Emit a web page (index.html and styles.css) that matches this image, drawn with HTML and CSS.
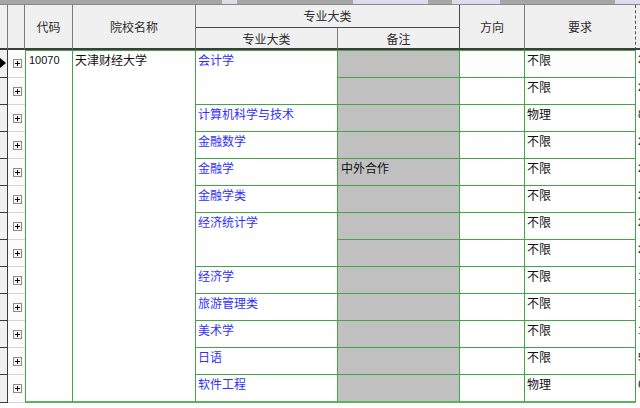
FILE: index.html
```html
<!DOCTYPE html>
<html lang="zh">
<head>
<meta charset="utf-8">
<title>专业大类</title>
<link rel="stylesheet" href="styles.css">
</head>
<body>
<div class="strip">
  <span class="sg s1"></span><span class="sl s2"></span><span class="sg s3"></span><span class="sl s4"></span><span class="sg s5"></span><span class="sl s6"></span><span class="sg s7"></span><span class="sl s8"></span>
</div>
<div class="grid">
  <!-- header -->
  <div class="h hs"></div>
  <div class="h hs"></div>
  <div class="h hs">代码</div>
  <div class="h hs">院校名称</div>
  <div class="h hg">专业大类</div>
  <div class="h hs">方向</div>
  <div class="h hs dash">要求</div>
  <div class="h hs hx"></div>
  <div class="h hsub">专业大类</div>
  <div class="h hsub hdark">备注</div>

  <!-- merged data cells -->
  <div class="c top bot code num">10070</div>
  <div class="c top bot school">天津财经大学</div>
  <div class="c top major m1">会计学</div>
  <div class="c major m7">经济统计学</div>

  <!-- row 1 -->
  <div class="sel"><svg width="6" height="10" viewBox="0 0 6 10"><path d="M0 0 L6 5 L0 10 Z" fill="#000"/></svg></div>
  <div class="exp"><svg class="plus" width="9" height="9" viewBox="0 0 9 9"><rect x="0.5" y="0.5" width="8" height="8" fill="#f6f6f6" stroke="#8c8c8c"/><path d="M2 4.5 H7 M4.5 2 V7" stroke="#000"/></svg></div>
  <div class="c top rem"></div>
  <div class="c top"></div>
  <div class="c top">不限</div>
  <div class="x">2</div>

  <!-- row 2 -->
  <div class="sel"></div>
  <div class="exp"><svg class="plus" width="9" height="9" viewBox="0 0 9 9"><rect x="0.5" y="0.5" width="8" height="8" fill="#f6f6f6" stroke="#8c8c8c"/><path d="M2 4.5 H7 M4.5 2 V7" stroke="#000"/></svg></div>
  <div class="c rem"></div>
  <div class="c"></div>
  <div class="c">不限</div>
  <div class="x">2</div>

  <!-- row 3 -->
  <div class="sel"></div>
  <div class="exp"><svg class="plus" width="9" height="9" viewBox="0 0 9 9"><rect x="0.5" y="0.5" width="8" height="8" fill="#f6f6f6" stroke="#8c8c8c"/><path d="M2 4.5 H7 M4.5 2 V7" stroke="#000"/></svg></div>
  <div class="c major">计算机科学与技术</div>
  <div class="c rem"></div>
  <div class="c"></div>
  <div class="c">物理</div>
  <div class="x">8</div>

  <!-- row 4 -->
  <div class="sel"></div>
  <div class="exp"><svg class="plus" width="9" height="9" viewBox="0 0 9 9"><rect x="0.5" y="0.5" width="8" height="8" fill="#f6f6f6" stroke="#8c8c8c"/><path d="M2 4.5 H7 M4.5 2 V7" stroke="#000"/></svg></div>
  <div class="c major">金融数学</div>
  <div class="c rem"></div>
  <div class="c"></div>
  <div class="c">不限</div>
  <div class="x">2</div>

  <!-- row 5 -->
  <div class="sel"></div>
  <div class="exp"><svg class="plus" width="9" height="9" viewBox="0 0 9 9"><rect x="0.5" y="0.5" width="8" height="8" fill="#f6f6f6" stroke="#8c8c8c"/><path d="M2 4.5 H7 M4.5 2 V7" stroke="#000"/></svg></div>
  <div class="c major">金融学</div>
  <div class="c rem">中外合作</div>
  <div class="c"></div>
  <div class="c">不限</div>
  <div class="x">2</div>

  <!-- row 6 -->
  <div class="sel"></div>
  <div class="exp"><svg class="plus" width="9" height="9" viewBox="0 0 9 9"><rect x="0.5" y="0.5" width="8" height="8" fill="#f6f6f6" stroke="#8c8c8c"/><path d="M2 4.5 H7 M4.5 2 V7" stroke="#000"/></svg></div>
  <div class="c major">金融学类</div>
  <div class="c rem"></div>
  <div class="c"></div>
  <div class="c">不限</div>
  <div class="x">2</div>

  <!-- row 7 -->
  <div class="sel"></div>
  <div class="exp"><svg class="plus" width="9" height="9" viewBox="0 0 9 9"><rect x="0.5" y="0.5" width="8" height="8" fill="#f6f6f6" stroke="#8c8c8c"/><path d="M2 4.5 H7 M4.5 2 V7" stroke="#000"/></svg></div>
  <div class="c rem"></div>
  <div class="c"></div>
  <div class="c">不限</div>
  <div class="x">2</div>

  <!-- row 8 -->
  <div class="sel"></div>
  <div class="exp"><svg class="plus" width="9" height="9" viewBox="0 0 9 9"><rect x="0.5" y="0.5" width="8" height="8" fill="#f6f6f6" stroke="#8c8c8c"/><path d="M2 4.5 H7 M4.5 2 V7" stroke="#000"/></svg></div>
  <div class="c rem"></div>
  <div class="c"></div>
  <div class="c">不限</div>
  <div class="x">2</div>

  <!-- row 9 -->
  <div class="sel"></div>
  <div class="exp"><svg class="plus" width="9" height="9" viewBox="0 0 9 9"><rect x="0.5" y="0.5" width="8" height="8" fill="#f6f6f6" stroke="#8c8c8c"/><path d="M2 4.5 H7 M4.5 2 V7" stroke="#000"/></svg></div>
  <div class="c major">经济学</div>
  <div class="c rem"></div>
  <div class="c"></div>
  <div class="c">不限</div>
  <div class="x">1</div>

  <!-- row 10 -->
  <div class="sel"></div>
  <div class="exp"><svg class="plus" width="9" height="9" viewBox="0 0 9 9"><rect x="0.5" y="0.5" width="8" height="8" fill="#f6f6f6" stroke="#8c8c8c"/><path d="M2 4.5 H7 M4.5 2 V7" stroke="#000"/></svg></div>
  <div class="c major">旅游管理类</div>
  <div class="c rem"></div>
  <div class="c"></div>
  <div class="c">不限</div>
  <div class="x">1</div>

  <!-- row 11 -->
  <div class="sel"></div>
  <div class="exp"><svg class="plus" width="9" height="9" viewBox="0 0 9 9"><rect x="0.5" y="0.5" width="8" height="8" fill="#f6f6f6" stroke="#8c8c8c"/><path d="M2 4.5 H7 M4.5 2 V7" stroke="#000"/></svg></div>
  <div class="c major">美术学</div>
  <div class="c rem"></div>
  <div class="c"></div>
  <div class="c">不限</div>
  <div class="x">1</div>

  <!-- row 12 -->
  <div class="sel"></div>
  <div class="exp"><svg class="plus" width="9" height="9" viewBox="0 0 9 9"><rect x="0.5" y="0.5" width="8" height="8" fill="#f6f6f6" stroke="#8c8c8c"/><path d="M2 4.5 H7 M4.5 2 V7" stroke="#000"/></svg></div>
  <div class="c major">日语</div>
  <div class="c rem"></div>
  <div class="c"></div>
  <div class="c">不限</div>
  <div class="x">5</div>

  <!-- row 13 -->
  <div class="sel"></div>
  <div class="exp"><svg class="plus" width="9" height="9" viewBox="0 0 9 9"><rect x="0.5" y="0.5" width="8" height="8" fill="#f6f6f6" stroke="#8c8c8c"/><path d="M2 4.5 H7 M4.5 2 V7" stroke="#000"/></svg></div>
  <div class="c bot major">软件工程</div>
  <div class="c bot rem"></div>
  <div class="c bot"></div>
  <div class="c bot">物理</div>
  <div class="x">6</div>
</div>
</body>
</html>
```
FILE: styles.css
```css
html, body {
  margin: 0;
  padding: 0;
}
body {
  width: 640px;
  height: 408px;
  overflow: hidden;
  background: #ffffff;
  font-family: "Noto Sans CJK SC", "Noto Sans", sans-serif;
  font-size: 12px;
  color: #111;
}

/* top scroll strip */
.strip {
  display: flex;
  height: 5px;
  width: 640px;
  border-bottom: 1px solid #8a8a8a;
  box-sizing: border-box;
}
.sg { background: #a6a6a6; }
.sl { background: #dcdcec; }
.s1 { width: 222px; }
.s2 { width: 15px; }
.s3 { width: 116px; }
.s4 { width: 75px; }
.s5 { width: 24px; }
.s6 { width: 48px; }
.s7 { width: 115px; }
.s8 { width: 25px; }

/* grid */
.grid {
  display: grid;
  width: 676px;
  grid-template-columns: 8px 17px 48px 123px 142px 122px 65px 111px 40px;
  grid-template-rows: 23px 22px 28px repeat(11, 27px) 28px;
}
.grid > div {
  box-sizing: border-box;
  overflow: hidden;
  white-space: nowrap;
}

/* header */
.h {
  background: #f0f0f0;
  border-right: 1px solid #7c7c7c;
  display: flex;
  align-items: center;
  justify-content: center;
  color: #2c2c2c;
  line-height: 14px;
}
.hs {
  grid-row: span 2;
  border-bottom: 2px solid #3c3c3c;
}
.hg {
  grid-column: span 2;
  border-bottom: 1px solid #4a4a4a;
  border-right-color: #4a4a4a;
}
.hsub {
  border-bottom: 2px solid #3c3c3c;
  padding-top: 1px;
}
.hdark { border-right-color: #4a4a4a; }
.dash { border-right: 1px dashed #555; }
.h.hx { border-right: none; border-left: 1px solid #4a4a4a; }
.h.dash + .hx { border-left: none; }

/* data */
.sel {
  background: #f0f0f0;
  border-right: 1px solid #3c3c3c;
  border-bottom: 1px solid #3c3c3c;
  display: flex;
  align-items: center;
  padding-bottom: 2px;
}
.exp {
  background: #fcfcfc;
  border-bottom: 1px solid #d6d6d6;
  display: flex;
  align-items: center;
  justify-content: center;
  padding-left: 1px;
}
.plus { display: block; }

.c {
  border-right: 1px solid #45a445;
  border-bottom: 1px solid #45a445;
  padding: 1px 2px 0;
  line-height: 15px;
  background: #fff;
}
.c.top { border-top: 1px solid #45a445; }
.c.bot { border-bottom: 2px solid #5fb35f; }
.code {
  grid-column: 3;
  grid-row: 3 / span 13;
  border-left: 1px solid #45a445;
  border-right-width: 1px;
}
.school {
  grid-column: 4;
  grid-row: 3 / span 13;
  padding-left: 2px;
}
.num {
  font-family: "Liberation Sans", "DejaVu Sans", sans-serif;
  font-size: 11px;
  padding-left: 3px;
  padding-top: 2px;
}
.major { color: #2f2fff; }
.m1 {
  grid-column: 5;
  grid-row: 3 / span 2;
}
.m7 {
  grid-column: 5;
  grid-row: 9 / span 2;
}
.rem {
  background: #c0c0c0;
  padding-left: 3px;
}
.x {
  font-family: "Liberation Sans", "DejaVu Sans", sans-serif;
  font-size: 11px;
  padding: 3px 0 0 2px;
  color: #222;
}
```
